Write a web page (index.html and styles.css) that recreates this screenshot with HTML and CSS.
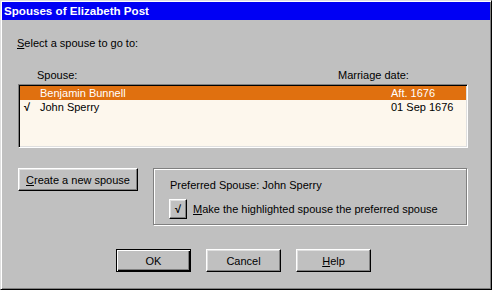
FILE: index.html
```html
<!DOCTYPE html>
<html lang="en">
<head>
    <meta charset="UTF-8">
    <title>Spouses of Elizabeth Post</title>
    <link rel="stylesheet" href="styles.css">
</head>
<body>
    <div class="window">
        <div class="title">Spouses of Elizabeth Post</div>
        <div class="main">
            <div class="prompt"><u>S</u>elect a spouse to go to:</div>
            <div class="heads">
                <span class="head-name">Spouse:</span>
                <span>Marriage date:</span>
            </div>
            <div class="listbox">
                <div class="row selected">
                    <span class="mark"></span>
                    <span>Benjamin Bunnell</span>
                    <span>Aft. 1676</span>
                </div>
                <div class="row">
                    <span class="mark">&#8730;</span>
                    <span>John Sperry</span>
                    <span>01 Sep 1676</span>
                </div>
            </div>
            <div class="actions">
                <button class="btn create"><u>C</u>reate a new spouse</button>
                <div class="group">
                    <div class="pref-line">Preferred Spouse: John Sperry</div>
                    <div class="pref-row">
                        <button class="btn check">&#8730;</button>
                        <span><u>M</u>ake the highlighted spouse the preferred spouse</span>
                    </div>
                </div>
            </div>
            <div class="buttons">
                <button class="btn default">OK</button>
                <button class="btn">Cancel</button>
                <button class="btn"><u>H</u>elp</button>
            </div>
        </div>
    </div>
</body>
</html>
```

FILE: styles.css
```css
body {
    margin: 0;
    font-family: "Liberation Sans", Arial, sans-serif;
    font-size: 11px;
    color: #000;
}
.window {
    width: 492px;
    height: 290px;
    box-sizing: border-box;
    background-color: #c0c0c0;
    border: 1px solid;
    border-color: #dfdfdf #000 #000 #dfdfdf;
    box-shadow: inset 1px 1px #fff, inset -1px -1px #808080;
    padding: 1px;
}
.title {
    height: 18px;
    line-height: 18px;
    padding-left: 2px;
    background-color: #0000f4;
    color: #fff;
    font-weight: bold;
    font-size: 11.6px;
}
.main {
    padding-left: 16px;
}
.prompt {
    margin-top: 17px;
    margin-left: -1px;
    line-height: 13px;
}
.heads {
    display: grid;
    grid-template-columns: 320px auto;
    margin-top: 19px;
    line-height: 13px;
}
.head-name {
    padding-left: 19px;
}
.listbox {
    width: 450px;
    height: 64px;
    box-sizing: border-box;
    margin-top: 2px;
    background-color: #fdf7ed;
    border: 1px solid;
    border-color: #808080 #fff #fff #808080;
    box-shadow: inset 1px 1px #000, inset -1px -1px #dfdfdf;
    padding: 1px;
}
.row {
    display: grid;
    grid-template-columns: 20px 351px auto;
    height: 14px;
    line-height: 14px;
}
.row.selected {
    background-color: #e0700f;
    color: #fff;
}
.mark {
    padding-left: 4px;
    font-weight: bold;
}
.actions {
    display: flex;
    align-items: flex-start;
    margin-top: 20px;
}
.btn {
    font-family: "Liberation Sans", Arial, sans-serif;
    font-size: 11px;
    color: #000;
    background-color: #c0c0c0;
    border: 1px solid;
    border-color: #fff #000 #000 #fff;
    box-shadow: inset -1px -1px #808080, inset 1px 1px #dfdfdf;
    padding: 0;
    margin: 0;
}
.create {
    width: 120px;
    height: 23px;
}
.group {
    width: 314px;
    height: 57px;
    box-sizing: border-box;
    margin-left: 15px;
    border: 1px solid #808080;
    box-shadow: inset 1px 1px #fff, 1px 1px #fff;
    padding: 10px 0 0 16px;
}
.pref-line {
    line-height: 13px;
}
.pref-row {
    display: flex;
    align-items: center;
    gap: 6px;
    margin-top: 7px;
    margin-left: -1px;
}
.check {
    width: 18px;
    height: 20px;
    font-weight: bold;
}
.buttons {
    display: flex;
    gap: 15px;
    margin-top: 24px;
    margin-left: 98px;
}
.buttons .btn {
    width: 75px;
    height: 23px;
}
.buttons .default {
    border-color: #000;
    box-shadow: inset 1px 1px #fff, inset -1px -1px #000, inset -2px -2px #808080;
}
```
